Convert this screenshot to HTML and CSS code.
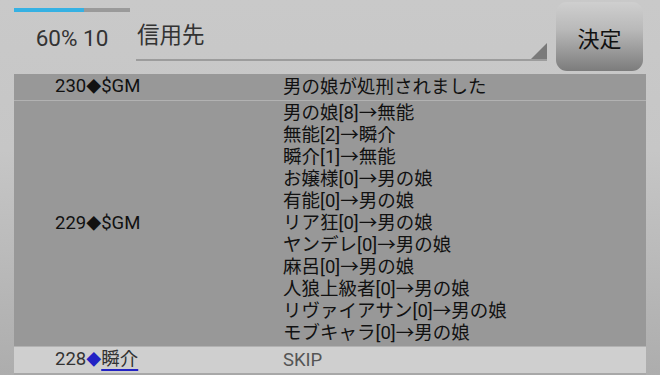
FILE: index.html
```html
<!DOCTYPE html>
<html lang="ja">
<head>
  <meta charset="UTF-8">
  <title>投票</title>
  <link rel="stylesheet" href="styles.css">
</head>
<body>
  <div class="topbar">
    <div class="status">
      <div class="progress"><div class="progress-fill"></div></div>
      <div class="count">60% 10</div>
    </div>
    <div class="select">
      <span class="select-text">信用先</span>
      <span class="select-arrow"></span>
    </div>
    <button class="decide">決定</button>
  </div>

  <table class="log">
    <tr class="row dark">
      <td class="who">230<span class="dia">◆</span>$GM</td>
      <td class="what">男の娘が処刑されました</td>
    </tr>
    <tr class="row dark">
      <td class="who">229<span class="dia">◆</span>$GM</td>
      <td class="what">
        男の娘[8]→無能<br>
        無能[2]→瞬介<br>
        瞬介[1]→無能<br>
        お嬢様[0]→男の娘<br>
        有能[0]→男の娘<br>
        リア狂[0]→男の娘<br>
        ヤンデレ[0]→男の娘<br>
        麻呂[0]→男の娘<br>
        人狼上級者[0]→男の娘<br>
        リヴァイアサン[0]→男の娘<br>
        モブキャラ[0]→男の娘
      </td>
    </tr>
    <tr class="row light">
      <td class="who">228<span class="dia blue">◆</span><span class="name">瞬介</span></td>
      <td class="what skip">SKIP</td>
    </tr>
  </table>
</body>
</html>
```

FILE: styles.css
```css
body {
  margin: 0;
  width: 660px;
  height: 375px;
  overflow: hidden;
  font-family: Roboto, "Noto Sans CJK JP", sans-serif;
  background: linear-gradient(180deg, #c9c9c9 0%, #c6c6c6 40%, #adadad 100%);
  color: #111;
}
.topbar {
  display: flex;
  align-items: flex-start;
  height: 74px;
}
.status {
  width: 116px;
  margin-left: 14px;
  padding-top: 8px;
}
.progress {
  height: 4px;
  background: #9a9a9a;
}
.progress-fill {
  width: 60%;
  height: 100%;
  background: #35b1e3;
}
.count {
  margin-top: 13px;
  text-align: center;
  font-size: 22.5px;
  line-height: 26px;
  color: #333;
}
.select {
  position: relative;
  margin-left: 6px;
  width: 411px;
  height: 61px;
  border-bottom: 2px solid #9c9c9c;
  box-sizing: border-box;
}
.select-text {
  display: block;
  padding: 20px 0 0 1px;
  font-size: 22.5px;
  line-height: 30px;
  color: #333;
}
.select-arrow {
  position: absolute;
  right: 0;
  bottom: 0;
  width: 0;
  height: 0;
  border-left: 16px solid transparent;
  border-bottom: 16px solid #7a7a7a;
}
.decide {
  margin: 2px 0 0 9px;
  width: 87px;
  height: 69px;
  border: none;
  border-radius: 11px;
  background: linear-gradient(180deg, #cfcfcf 0%, #b9b9b9 40%, #7c7c7c 100%);
  font-family: "Noto Sans CJK JP", sans-serif;
  font-size: 22px;
  color: #111;
  padding: 0;
}
.log {
  margin-left: 14px;
  width: 632px;
  border-collapse: collapse;
  font-size: 18.5px;
  line-height: 22px;
}
.row td {
  padding: 1px 0 2px;
  vertical-align: middle;
}
.dark {
  background: #989898;
  border-bottom: 1px solid #b2b2b2;
}
.light {
  background: #cfcfcf;
  border-bottom: 2px solid #a8a8a8;
  color: #333;
}
.who {
  width: 228px;
  padding-left: 41px !important;
  white-space: nowrap;
}
.dia {
  font-size: 15px;
}
.blue {
  color: #2222c4;
}
.name {
  color: #333;
  text-decoration: underline;
  text-decoration-color: #2222c4;
  text-decoration-thickness: 2px;
  text-underline-offset: 4px;
}
.skip {
  color: #555;
}
```
